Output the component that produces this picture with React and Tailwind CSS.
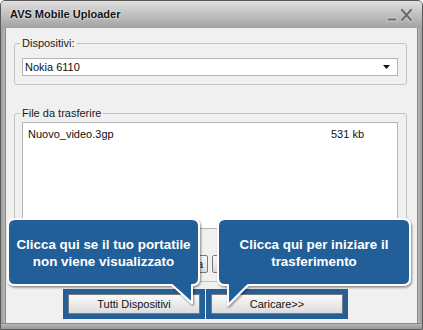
const font = { fontFamily: '"Liberation Sans", Arial, sans-serif' };

function WinButton({ children, className = "" }) {
    return (
        <div
            className={`flex items-center justify-center border border-[#7a7a7a] bg-gradient-to-b from-[#fafafa] to-[#dcdcdc] text-[11px] text-[#111] ${className}`}
        >
            {children}
        </div>
    );
}

function Group({ title, className = "", children }) {
    return (
        <fieldset className={`border border-[#c4c4c4] rounded-[3px] p-0 m-0 min-w-0 ${className}`}>
            <legend className="ml-[5px] px-[2px] text-[11px] leading-[13px] text-[#1b1b1b]">{title}</legend>
            {children}
        </fieldset>
    );
}

function Callouts() {
    return (
        <svg className="absolute inset-0 pointer-events-none" width="423" height="330" viewBox="0 0 423 330">
            <defs>
                <filter id="callout-shadow" x="-10%" y="-10%" width="120%" height="130%">
                    <feDropShadow dx="1" dy="1.5" stdDeviation="1.2" floodColor="#000" floodOpacity="0.45" />
                </filter>
            </defs>
            <g fill="#245f98" stroke="#fff" strokeWidth="2" strokeLinejoin="round" filter="url(#callout-shadow)">
                <path d="M15 219 H192 Q199 219 199 226 V278 Q199 285 192 285 V303 L172 285 H15 Q8 285 8 278 V226 Q8 219 15 219 Z" />
                <path d="M225 219 H403 Q410 219 410 226 V278 Q410 285 403 285 H248 L228 305 V285 H225 Q218 285 218 278 V226 Q218 219 225 219 Z" />
            </g>
        </svg>
    );
}

export default function App() {
    return (
        <div className="relative w-[423px] h-[330px] bg-white" style={font}>
            <div className="w-full h-full flex flex-col border border-[#5a5a5a] rounded-t-[5px] overflow-hidden bg-[#a9a9a9]">
                {/* title bar */}
                <div className="h-[27px] flex items-center justify-between bg-gradient-to-b from-[#e0e0e0] to-[#a2a2a2] pl-[9px] pr-[7px]">
                    <span className="text-[11px] font-bold text-[#151515] [text-shadow:0_0_3px_#ffffff]">AVS Mobile Uploader</span>
                    <svg width="30" height="16" viewBox="0 0 30 16" className="mt-[2px]">
                        <rect x="1.5" y="9.5" width="11" height="4" fill="#d4d4d4" />
                        <rect x="2.5" y="10.5" width="9" height="2" fill="#6a6a6a" />
                        <g stroke="#d4d4d4" strokeWidth="3.4" strokeLinecap="square">
                            <path d="M17 2 L26 12 M26 2 L17 12" />
                        </g>
                        <g stroke="#6a6a6a" strokeWidth="2" strokeLinecap="square">
                            <path d="M17 2 L26 12 M26 2 L17 12" />
                        </g>
                    </svg>
                </div>

                <div className="flex flex-1">
                    <div className="w-[5px] bg-gradient-to-r from-[#9c9c9c] to-[#b8b8b8] border-r border-[#8a8a8a]" />

                    {/* client area */}
                    <div className="flex-1 bg-[#f0f0f0] pt-[9px] pl-[8px] pr-[10px]">
                        <Group title="Dispositivi:">
                            <div className="pl-[7px] pr-[8px] pt-[8px] pb-[8px]">
                                <div className="h-[18px] flex items-center justify-between bg-white border border-[#b4b4b4] pl-[2px] pr-[7px] text-[11px] text-[#111]">
                                    <span>Nokia 6110</span>
                                    <svg width="7" height="4" viewBox="0 0 7 4">
                                        <path d="M0 0 H7 L3.5 4 Z" fill="#111" />
                                    </svg>
                                </div>
                            </div>
                        </Group>

                        <Group title="File da trasferire" className="mt-[22px]">
                            <div className="pl-[7px] pr-[8px] pt-[2px] pb-[8px]">
                                <div className="h-[107px] bg-white border border-[#b4b4b4] pl-[5px] pt-[3px] text-[11px] text-[#111]">
                                    <div className="flex">
                                        <span className="w-[303px]">Nuovo_video.3gp</span>
                                        <span>531 kb</span>
                                    </div>
                                </div>
                                <div className="mt-[26px] ml-[34px] flex gap-[4px]">
                                    <WinButton className="w-[74px] h-[18px] rounded-[2px]" />
                                    <WinButton className="w-[74px] h-[18px] rounded-[2px] justify-end pr-[4px]">Cancella tutta</WinButton>
                                    <WinButton className="w-[74px] h-[18px] rounded-[2px]" />
                                    <WinButton className="w-[74px] h-[18px] rounded-[2px]" />
                                </div>
                            </div>
                        </Group>

                        <div className="mt-[12px] ml-[54px] flex gap-[11px]">
                            <WinButton className="w-[132px] h-[20px] outline-[5px] outline-solid outline-[#245f98]">Tutti Dispositivi</WinButton>
                            <WinButton className="w-[132px] h-[20px] outline-[5px] outline-solid outline-[#245f98]">Caricare&gt;&gt;</WinButton>
                        </div>
                    </div>

                    <div className="w-[5px] bg-gradient-to-r from-[#b8b8b8] to-[#9c9c9c] border-l border-[#8a8a8a]" />
                </div>

                <div className="h-[6px] bg-gradient-to-b from-[#b5b5b5] to-[#999999] border-t border-[#8a8a8a]" />
            </div>

            <Callouts />

            <div className="absolute left-[8px] top-[236px] w-[191px] text-center text-[13.4px] leading-[17px] font-bold text-white">
                Clicca qui se il tuo portatile
                <br />
                non viene visualizzato
            </div>
            <div className="absolute left-[218px] top-[236px] w-[192px] text-center text-[13.4px] leading-[17px] font-bold text-white">
                Clicca qui per iniziare il
                <br />
                trasferimento
            </div>
        </div>
    );
}
